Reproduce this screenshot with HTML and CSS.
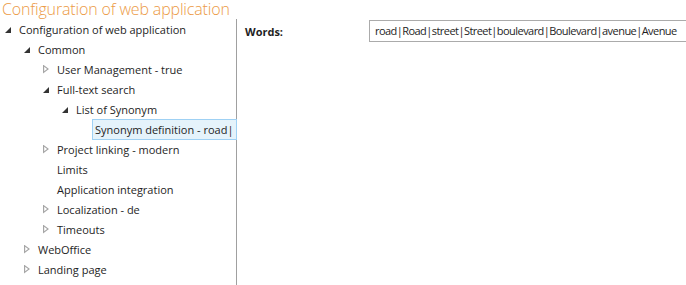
FILE: index.html
```html
<!DOCTYPE html>
<html lang="en">
<head>
  <meta charset="UTF-8" />
  <title>Configuration of web application</title>
  <link rel="stylesheet" href="styles.css">
</head>
<body>

<div class="page">
  <div class="page-title">Configuration of web application</div>

  <div class="config-body">
    <ul class="tree">
      <li class="node open lvl0"><span class="arrow"></span><span class="label">Configuration of web application</span></li>
      <li class="node open lvl1"><span class="arrow"></span><span class="label">Common</span></li>
      <li class="node closed lvl2"><span class="arrow"></span><span class="label">User Management - true</span></li>
      <li class="node open lvl2"><span class="arrow"></span><span class="label">Full-text search</span></li>
      <li class="node open lvl3"><span class="arrow"></span><span class="label">List of Synonym</span></li>
      <li class="node leaf lvl4 selected"><span class="arrow"></span><span class="label">Synonym definition - road|</span></li>
      <li class="node closed lvl2"><span class="arrow"></span><span class="label">Project linking - modern</span></li>
      <li class="node leaf lvl2"><span class="arrow"></span><span class="label">Limits</span></li>
      <li class="node leaf lvl2"><span class="arrow"></span><span class="label">Application integration</span></li>
      <li class="node closed lvl2"><span class="arrow"></span><span class="label">Localization - de</span></li>
      <li class="node closed lvl2"><span class="arrow"></span><span class="label">Timeouts</span></li>
      <li class="node closed lvl1"><span class="arrow"></span><span class="label">WebOffice</span></li>
      <li class="node closed lvl1"><span class="arrow"></span><span class="label">Landing page</span></li>
    </ul>

    <div class="details">
      <div class="field">
        <label class="field-label">Words:</label>
        <div class="field-value">road|Road|street|Street|boulevard|Boulevard|avenue|Avenue</div>
      </div>
    </div>
  </div>
</div>

</body>
</html>
```

FILE: styles.css
```css
* {
  box-sizing: border-box;
}

body {
  margin: 0;
  background: white;
  font-family: "Open Sans", Arial, sans-serif;
  color: #1e1e1e;
  overflow: hidden;
}

.page {
  width: 686px;
  height: 285px;
  display: flex;
  flex-direction: column;
}

.page-title {
  font-size: 16px;
  font-weight: 300;
  color: #ec9a45;
  line-height: 18px;
  padding: 0 0 1px 2px;
  letter-spacing: -0.15px;
}

.config-body {
  flex: 1;
  display: flex;
  min-height: 0;
}

.tree {
  list-style: none;
  margin: 0;
  padding: 0;
  width: 237px;
  flex-shrink: 0;
  border-right: 1px solid #a0a0a0;
}

.node {
  height: 20px;
  display: flex;
  align-items: center;
  font-size: 11px;
  white-space: nowrap;
}

.lvl0 { padding-left: 0; }
.lvl1 { padding-left: 19px; }
.lvl2 { padding-left: 38px; }
.lvl3 { padding-left: 57px; }
.lvl4 { padding-left: 76px; }

.arrow {
  width: 17px;
  height: 20px;
  display: flex;
  align-items: center;
  padding-left: 5px;
  flex-shrink: 0;
}

.open .arrow::before {
  content: "";
  width: 0;
  height: 0;
  border-left: 6px solid transparent;
  border-bottom: 6px solid #333;
  margin-top: 2px;
}

.closed .arrow::before {
  content: "";
  width: 6px;
  height: 9px;
  background: #a6a6a6;
  clip-path: polygon(0 0, 100% 50%, 0 100%, 0 0, 1.2px 2.2px, 1.2px 6.8px, 4.1px 4.5px, 1.2px 2.2px);
}

.label {
  padding: 0 2px;
  line-height: 19px;
}

.selected .label {
  background: #e5f3fb;
  border: 1px solid #9fd1f4;
  height: 21px;
  line-height: 19px;
  padding: 0 3px 0 2px;
  margin-left: -1px;
}

.details {
  flex: 1;
  padding: 1px 0 0 8px;
  min-width: 0;
}

.field {
  display: flex;
  align-items: center;
  height: 22px;
}

.field-label {
  width: 124px;
  font-size: 11px;
  font-weight: 700;
}

.field-value {
  flex: 1;
  height: 22px;
  border: 1px solid #ababab;
  border-right: none;
  font-size: 11px;
  letter-spacing: -0.55px;
  line-height: 20px;
  padding-left: 5px;
  white-space: nowrap;
  overflow: hidden;
}
```
